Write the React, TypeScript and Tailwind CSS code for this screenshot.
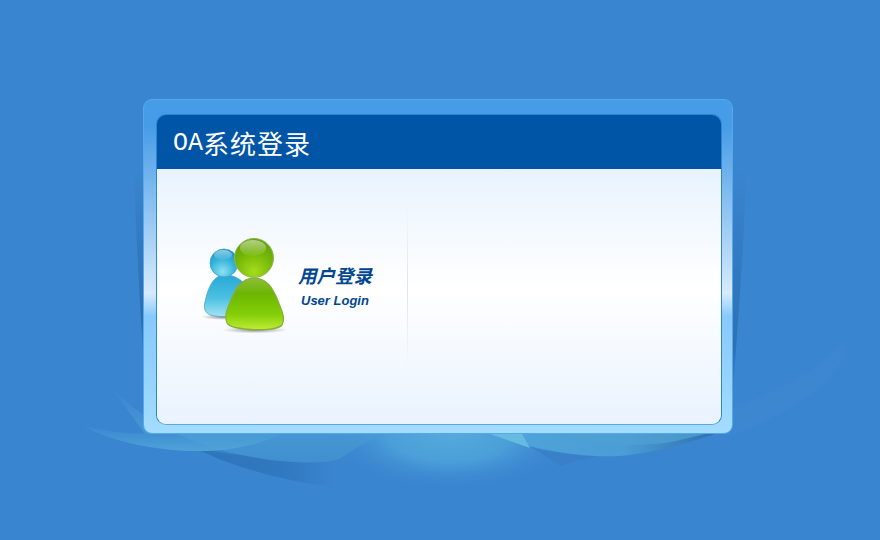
const Backdrop = () => (
  <svg className="absolute inset-0" width="880" height="540" viewBox="0 0 880 540">
    <defs>
      <linearGradient id="swoosh" x1="0" y1="0" x2="0" y2="1">
        <stop offset="0" stopColor="#4a9ed6" stopOpacity="0.1" />
        <stop offset="1" stopColor="#4fa5d8" stopOpacity="0.95" />
      </linearGradient>
      <linearGradient id="sweep" x1="0" y1="0" x2="0" y2="1">
        <stop offset="0" stopColor="#4a9ad2" stopOpacity="0" />
        <stop offset="0.6" stopColor="#4a9cd4" stopOpacity="0.75" />
        <stop offset="1" stopColor="#4190cf" stopOpacity="0.9" />
      </linearGradient>
      <radialGradient id="mound" cx="0.5" cy="0.5" r="0.5">
        <stop offset="0" stopColor="#54aadc" />
        <stop offset="0.5" stopColor="#4a9fd8" />
        <stop offset="1" stopColor="#3a85d0" stopOpacity="0" />
      </radialGradient>
      <linearGradient id="shade" x1="0" y1="0" x2="1" y2="0">
        <stop offset="0" stopColor="#2f75ba" />
        <stop offset="0.6" stopColor="#3078bf" />
        <stop offset="1" stopColor="#3a85d0" />
      </linearGradient>
      <linearGradient id="edgeL" x1="0" y1="0" x2="0" y2="1">
        <stop offset="0" stopColor="#3a85d0" />
        <stop offset="0.75" stopColor="#2568a8" />
        <stop offset="1" stopColor="#3a85d0" />
      </linearGradient>
      <linearGradient id="rightTail" x1="0" y1="0" x2="1" y2="0">
        <stop offset="0" stopColor="#4fa5d8" />
        <stop offset="0.6" stopColor="#4a9dd6" />
        <stop offset="1" stopColor="#2f70ae" />
      </linearGradient>
      <linearGradient id="faint" x1="1" y1="0" x2="0" y2="1">
        <stop offset="0" stopColor="#4a94cc" stopOpacity="0.5" />
        <stop offset="1" stopColor="#4a94cc" stopOpacity="0.9" />
      </linearGradient>
    </defs>
    {/* dark wedges beside the frame */}
    <path d="M134 170 C136 240 140 300 144 370 L144 170 Z" fill="url(#edgeL)" opacity="0.8" />
    <path d="M746 170 C744 250 738 320 732 405 L732 170 Z" fill="url(#edgeL)" opacity="0.7" />
    {/* left sweeps */}
    <path d="M195 448 C240 472 310 485 335 487 L335 462 C290 462 240 456 195 448 Z" fill="url(#shade)" />
    {/* centre glow */}
    <ellipse cx="450" cy="434" rx="125" ry="56" fill="url(#mound)" />
    <path d="M108 383 C135 415 185 448 270 460 C305 464 335 463 343 457 C355 448 370 440 385 434 L145 434 Z" fill="url(#sweep)" />
    <path d="M82 425 C120 448 190 455 230 449 C255 445 270 440 280 434 L145 434 C125 434 100 430 82 425 Z" fill="url(#swoosh)" />
    {/* right sweeps */}
    <path d="M530 447 C542 453 552 460 560 466 C572 462 590 458 600 456 C575 456 550 453 530 447 Z" fill="#3a80c8" />
    <path d="M490 434 C540 452 590 458 620 456 C660 452 690 442 715 434 Z" fill="url(#rightTail)" />
    <path d="M555 434 C590 447 650 448 680 440 L705 434 Z" fill="#4e9fd3" opacity="0.8" />
    <path d="M490 434 L530 448 L522 434 Z" fill="#66bce0" />
    <path d="M733 408 C775 392 820 372 845 340 C850 375 790 420 700 445 C715 440 725 436 733 430 Z" fill="url(#faint)" opacity="0.16" />
  </svg>
)

// svg origin sits at page (199, 234)
const UsersIcon = () => (
  <svg width="90" height="100" viewBox="0 0 90 100" className="shrink-0">
    <defs>
      <radialGradient id="blueHead" cx="0.45" cy="0.8" r="0.8">
        <stop offset="0" stopColor="#8fe0f2" />
        <stop offset="0.55" stopColor="#35b5dc" />
        <stop offset="1" stopColor="#1a92c4" />
      </radialGradient>
      <linearGradient id="blueBody" x1="0" y1="0" x2="0" y2="1">
        <stop offset="0" stopColor="#28a8d6" />
        <stop offset="0.55" stopColor="#4cc0e2" />
        <stop offset="1" stopColor="#a4e4f2" />
      </linearGradient>
      <radialGradient id="greenHead" cx="0.5" cy="0.85" r="0.85">
        <stop offset="0" stopColor="#a6dc1c" />
        <stop offset="0.6" stopColor="#72b606" />
        <stop offset="1" stopColor="#629f0c" />
      </radialGradient>
      <linearGradient id="greenBody" x1="0" y1="0" x2="0" y2="1">
        <stop offset="0" stopColor="#8cbd3c" />
        <stop offset="0.3" stopColor="#6cb602" />
        <stop offset="0.7" stopColor="#84ce08" />
        <stop offset="1" stopColor="#bcec34" />
      </linearGradient>
      <linearGradient id="gloss" x1="0" y1="0" x2="0" y2="1">
        <stop offset="0" stopColor="#ffffff" stopOpacity="0.5" />
        <stop offset="1" stopColor="#ffffff" stopOpacity="0.04" />
      </linearGradient>
      <radialGradient id="floor" cx="0.5" cy="0.5" r="0.5">
        <stop offset="0" stopColor="#5f5f5f" stopOpacity="0.75" />
        <stop offset="1" stopColor="#8a8a8a" stopOpacity="0" />
      </radialGradient>
    </defs>
    <ellipse cx="24" cy="83" rx="22" ry="3" fill="url(#floor)" />
    <ellipse cx="56" cy="96" rx="33" ry="3.5" fill="url(#floor)" />
    <path d="M26 41 C14 41 9 54 6 68 C4 76 7 81 16 82 C24 83 36 83 42 80 L46 50 C40 44 34 41 26 41 Z" fill="url(#blueBody)" stroke="#4aa9cc" strokeWidth="0.8" />
    <circle cx="25" cy="29" r="14" fill="url(#blueHead)" stroke="#3fa5cb" strokeWidth="0.8" />
    <ellipse cx="24" cy="21" rx="9" ry="5" fill="url(#gloss)" />
    <path d="M55 44 C42 44 36 56 32 66 C28 75 25 82 28 89 C32 97 77 98 83 91 C87 84 82 75 79 67 C74 54 68 44 55 44 Z" fill="url(#greenBody)" stroke="#88ad3a" strokeWidth="1.2" />
    <circle cx="55" cy="24" r="19.5" fill="url(#greenHead)" stroke="#93b35a" strokeWidth="1" />
    <ellipse cx="54" cy="14" rx="13" ry="8" fill="url(#gloss)" />
  </svg>
)

export default function App() {
  return (
    <div className="relative w-[880px] h-[540px] overflow-hidden bg-[#3a85d0] font-['Liberation_Sans',sans-serif]">
      <Backdrop />

      {/* Login frame */}
      <div className="relative ml-[143px] pt-[99px] w-[590px]">
        <div className="h-[335px] rounded-[9px] border border-[#54a8ee] pt-[14px] pl-[12px] pr-[10px] pb-[8px] bg-[linear-gradient(to_bottom,#479ce8_8%,#d6ebfb_58%,#86c9fc_65%,#a3dcff_100%)]">
          <div className="h-full flex flex-col overflow-hidden rounded-[10px] border border-[#2f86cf] border-b-[#5ea6e2]">
            <div className="h-[54px] shrink-0 flex items-center pl-4 bg-[#0155a7] text-white">
              <span className="text-[25px] mt-[4px] font-['Liberation_Mono',monospace]">OA</span>
              <span className="text-[26px] tracking-[1px] font-['Noto_Sans_CJK_SC',sans-serif]">系统登录</span>
            </div>
            <div className="flex flex-1 items-start bg-gradient-to-b from-[#e8f3fe] via-white via-[47%] to-[#e9f3fe]">
              <div className="w-[250px] flex pl-[42px] pt-[65px]">
                <UsersIcon />
                <div className="ml-[9px] pt-[28px] text-[#03468f] italic whitespace-nowrap">
                  <div className="text-[18.5px] leading-[26px] font-bold font-['Noto_Sans_CJK_SC',sans-serif]">用户登录</div>
                  <div className="text-[13px] leading-[20px] mt-[3px] ml-[3px] font-bold">User Login</div>
                </div>
              </div>
              <div className="w-px h-[165px] mt-[36px] bg-gradient-to-b from-transparent via-[#dfe3e8] to-transparent" />
            </div>
          </div>
        </div>
      </div>
    </div>
  )
}
